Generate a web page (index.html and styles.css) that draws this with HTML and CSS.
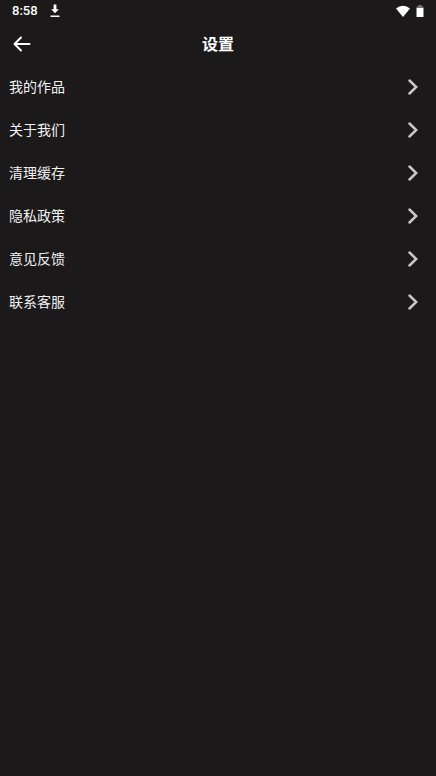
FILE: index.html
```html
<!DOCTYPE html>
<html lang="zh-CN">
<head>
<meta charset="utf-8">
<meta name="viewport" content="width=device-width, initial-scale=1">
<title>设置</title>
<link rel="stylesheet" href="styles.css">
</head>
<body>
<div class="status">
  <span class="time">8:58</span>
  <svg class="download" width="10" height="14" viewBox="0 0 10 14" aria-hidden="true"><path d="M3.6 0.500h2.800v4.800h2.400L5 9.300 1.200 5.300h2.400z"/><path d="M.5 11.500h9v1.500h-9z"/></svg>
  <svg class="wifi" width="14" height="12" viewBox="0 0 14 12" aria-hidden="true"><path d="M0 3.400Q3 .8 7 .8T14 3.400L7 12z"/></svg>
  <svg class="battery" width="8" height="14" viewBox="0 0 8 14" aria-hidden="true"><path class="cap" d="M2.300 1h3.400v1.500h1.800V4H.5V2.500h1.800z"/><path d="M.5 4h7v9h-7z"/></svg>
</div>
<header class="bar">
  <button class="back" type="button" aria-label="返回">
    <svg width="18" height="16" viewBox="0 0 18 16" aria-hidden="true"><path d="M8 1.500 1.500 8 8 14.500M1.500 8H16.500"/></svg>
  </button>
  <h1 class="title">设置</h1>
</header>
<main>
  <nav class="list">
    <a class="row" href="#works">我的作品<svg class="chevron" width="10" height="16" viewBox="0 0 10 16" aria-hidden="true"><path d="M1.500 1.500 8.200 8 1.500 14.500"/></svg></a>
    <a class="row" href="#about">关于我们<svg class="chevron" width="10" height="16" viewBox="0 0 10 16" aria-hidden="true"><path d="M1.500 1.500 8.200 8 1.500 14.500"/></svg></a>
    <a class="row" href="#cache">清理缓存<svg class="chevron" width="10" height="16" viewBox="0 0 10 16" aria-hidden="true"><path d="M1.500 1.500 8.200 8 1.500 14.500"/></svg></a>
    <a class="row" href="#privacy">隐私政策<svg class="chevron" width="10" height="16" viewBox="0 0 10 16" aria-hidden="true"><path d="M1.500 1.500 8.200 8 1.500 14.500"/></svg></a>
    <a class="row" href="#feedback">意见反馈<svg class="chevron" width="10" height="16" viewBox="0 0 10 16" aria-hidden="true"><path d="M1.500 1.500 8.200 8 1.500 14.500"/></svg></a>
    <a class="row" href="#service">联系客服<svg class="chevron" width="10" height="16" viewBox="0 0 10 16" aria-hidden="true"><path d="M1.500 1.500 8.200 8 1.500 14.500"/></svg></a>
  </nav>
</main>
</body>
</html>
```

FILE: styles.css
```css
* {
  box-sizing: border-box;
}

body {
  margin: 0;
  min-height: 100vh;
  background: #1b191a;
  color: #fff;
  font-family: Roboto, "Noto Sans CJK SC", sans-serif;
}

svg {
  display: block;
  fill: #fff;
}

.status {
  display: flex;
  align-items: center;
  height: 22px;
  padding: 0 12px;
}

.time {
  font-size: 13px;
  font-weight: 500;
  line-height: 22px;
}

.download {
  margin-left: 12px;
}

.wifi {
  margin-left: auto;
}

.battery {
  margin-left: 6px;
}

.cap {
  fill: #767475;
}

.bar {
  display: grid;
  grid-template-columns: 44px 1fr 44px;
  align-items: center;
  height: 43px;
}

.back {
  height: 42px;
  padding: 0 13px;
  border: 0;
  background: none;
}

.back path {
  fill: none;
  stroke: #fff;
  stroke-width: 2;
  stroke-linecap: round;
  stroke-linejoin: round;
}

.title {
  margin: 0;
  padding-top: 2px;
  font-size: 16px;
  font-weight: 700;
  line-height: 24px;
  text-align: center;
}

.row {
  display: flex;
  align-items: center;
  justify-content: space-between;
  height: 43px;
  padding: 0 18px 0 9px;
  color: #f2f2f2;
  font-size: 14px;
  line-height: 20px;
  text-decoration: none;
}

.chevron path {
  fill: none;
  stroke: #c9c8c8;
  stroke-width: 2.5;
  stroke-linecap: round;
}
```
